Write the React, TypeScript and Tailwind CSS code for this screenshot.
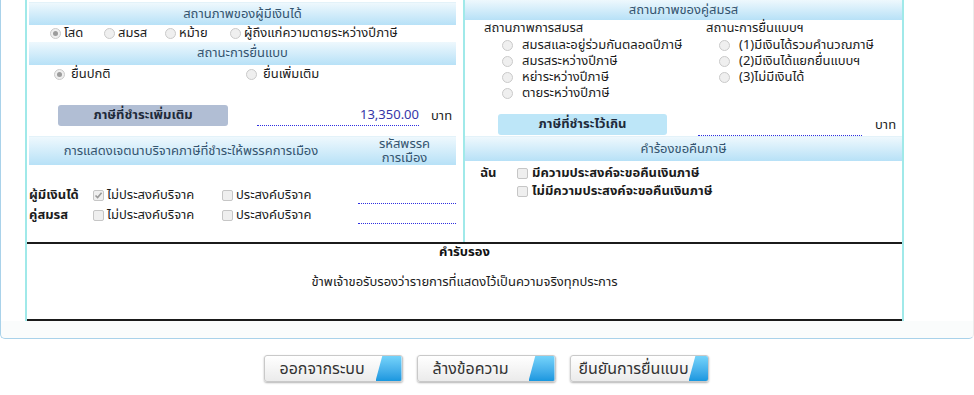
import React from "react";

function Radio({ checked }: { checked?: boolean }) {
  return (
    <span className="inline-flex h-[11px] w-[11px] shrink-0 items-center justify-center rounded-full border border-[#cacaca] bg-[#efefef]">
      {checked && <span className="h-[5px] w-[5px] rounded-full bg-[#9c9c9c]" />}
    </span>
  );
}

function Check({ checked }: { checked?: boolean }) {
  return (
    <span className="inline-flex h-[11px] w-[11px] shrink-0 items-center justify-center rounded-[2px] border border-[#c6c6c6] bg-[#efefef]">
      {checked && (
        <svg width="9" height="9" viewBox="0 0 9 9">
          <path d="M1.5 4.5 L3.6 6.6 L7.6 1.8" fill="none" stroke="#9a9a9a" strokeWidth="1.6" />
        </svg>
      )}
    </span>
  );
}

function Header({ text, h }: { text: string; h: string }) {
  return (
    <div className={`flex items-center justify-center bg-linear-to-b from-[#eef8fd] to-[#b7e1f7] text-[#34546f] ${h}`}>
      {text}
    </div>
  );
}

function ActionButton({ label, pad }: { label: string; pad: string }) {
  return (
    <div className="flex h-[27px] w-[139px] items-center overflow-hidden rounded-[3px] border border-[#c9c9c9] bg-linear-to-b from-white to-[#ebebeb] shadow-[0_1px_2px_rgba(0,0,0,0.3)]">
      <span className={`flex-1 whitespace-nowrap text-[16px] text-[#333] ${pad}`}>{label}</span>
      <span className="h-full w-[26px] shrink-0 bg-linear-to-b from-[#74d3fa] to-[#1797df] [clip-path:polygon(26%_0,100%_0,100%_100%,0_100%)]" />
    </div>
  );
}

export default function App() {
  return (
    <div className="h-[395px] w-[974px] bg-white font-['Tahoma','Noto_Sans_Thai','Leelawadee','Noto_Sans',sans-serif] text-[13px] leading-none text-[#1c1c1c]">
      <div className="h-[339px] w-[974px] rounded-b-[5px] border-x border-b border-l-[#a9d2ea] border-r-[#ececec] border-b-[#a9d2ea] bg-[#fafcfc]">
        <div className="bg-white pl-[24px] pr-[69px]">
          <div className="w-[879px] border-x-2 border-[#a0e9e9] bg-white">
            <div className="flex h-[242px]">
              {/* left column */}
              <div className="flex w-[436px] flex-col pl-[2px] pr-[7px]">
                <div className="h-[2px]" />
                <div className="h-[1px] bg-[#e3f2f9]" />
                <Header text="สถานภาพของผู้มีเงินได้" h="h-[22px]" />
                <div className="flex h-[17px] items-center pl-[21px]">
                  <div className="flex w-[54px] items-center gap-[3px]"><Radio checked />โสด</div>
                  <div className="flex w-[61px] items-center gap-[3px]"><Radio />สมรส</div>
                  <div className="flex w-[65px] items-center gap-[3px]"><Radio />หม้าย</div>
                  <div className="flex items-center gap-[3px]"><Radio />ผู้ถึงแก่ความตายระหว่างปีภาษี</div>
                </div>
                <Header text="สถานะการยื่นแบบ" h="h-[23px]" />
                <div className="flex h-[19px] items-center pl-[25px]">
                  <div className="flex w-[192px] items-center gap-[6px]"><Radio checked />ยื่นปกติ</div>
                  <div className="flex items-center gap-[6px]"><Radio />ยื่นเพิ่มเติม</div>
                </div>
                <div className="h-[21px]" />
                <div className="flex h-[21px] items-stretch pl-[29px]">
                  <div className="flex w-[170px] items-center justify-center rounded-[3px] bg-[#b1bed4] font-bold text-[#1f2a3a]">
                    ภาษีที่ชำระเพิ่มเติม
                  </div>
                  <div className="ml-[29px] flex w-[162px] items-center justify-end border-b border-dotted border-[#2f2fe0] text-[#3535a8]">
                    13,350.00
                  </div>
                  <div className="ml-[12px] flex items-center pt-[2px]">บาท</div>
                </div>
                <div className="h-[10px]" />
                <div className="h-[1px] bg-[#e3f2f9]" />
                <div className="flex h-[28px] bg-linear-to-b from-[#eef8fd] to-[#b7e1f7] text-[#34546f]">
                  <div className="flex w-[324px] items-center justify-center">การแสดงเจตนาบริจาคภาษีที่ชำระให้พรรคการเมือง</div>
                  <div className="flex flex-1 flex-col items-center justify-center leading-[14px]">
                    <span>รหัสพรรค</span>
                    <span>การเมือง</span>
                  </div>
                </div>
                <div className="h-[21px]" />
                <div className="flex h-[18px] items-stretch">
                  <div className="flex w-[64px] items-center font-bold">ผู้มีเงินได้</div>
                  <div className="flex w-[129px] items-center gap-[3px]"><Check checked />ไม่ประสงค์บริจาค</div>
                  <div className="flex w-[136px] items-center gap-[3px]"><Check />ประสงค์บริจาค</div>
                  <div className="flex-1 border-b border-dotted border-[#2f2fe0]" />
                </div>
                <div className="mt-[1px] flex h-[19px] items-stretch">
                  <div className="flex w-[64px] items-center pt-[1px] font-bold">คู่สมรส</div>
                  <div className="flex w-[129px] items-center gap-[3px] pt-[1px]"><Check />ไม่ประสงค์บริจาค</div>
                  <div className="flex w-[136px] items-center gap-[3px] pt-[1px]"><Check />ประสงค์บริจาค</div>
                  <div className="flex-1 border-b border-dotted border-[#2f2fe0]" />
                </div>
              </div>
              <div className="w-[2px] bg-[#a0e9e9]" />
              {/* right column */}
              <div className="flex w-[437px] flex-col">
                <Header text="สถานภาพของคู่สมรส" h="h-[20px]" />
                <div className="flex pl-[19px]">
                  <div className="flex w-[222px] flex-col">
                    <div className="flex h-[17px] items-center">สถานภาพการสมรส</div>
                    {["สมรสและอยู่ร่วมกันตลอดปีภาษี", "สมรสระหว่างปีภาษี", "หย่าระหว่างปีภาษี", "ตายระหว่างปีภาษี"].map((t) => (
                      <div key={t} className="flex h-[16px] items-center gap-[9px] pl-[18px]"><Radio />{t}</div>
                    ))}
                  </div>
                  <div className="flex flex-col">
                    <div className="flex h-[17px] items-center">สถานะการยื่นแบบฯ</div>
                    {["(1)มีเงินได้รวมคำนวณภาษี", "(2)มีเงินได้แยกยื่นแบบฯ", "(3)ไม่มีเงินได้"].map((t) => (
                      <div key={t} className="flex h-[16px] items-center gap-[9px] pl-[13px]"><Radio />{t}</div>
                    ))}
                  </div>
                </div>
                <div className="h-[13px]" />
                <div className="flex h-[22px] items-stretch pl-[33px]">
                  <div className="mb-[1px] flex w-[169px] items-center justify-center rounded-[3px] bg-[#bde6f8] font-bold text-[#1f2a3a]">
                    ภาษีที่ชำระไว้เกิน
                  </div>
                  <div className="ml-[31px] w-[164px] border-b border-dotted border-[#2f2fe0]" />
                  <div className="ml-[13px] flex items-center">บาท</div>
                </div>
                <div className="h-[1px] bg-[#e3f2f9]" />
                <Header text="คำร้องขอคืนภาษี" h="h-[24px]" />
                <div className="h-[3px]" />
                <div className="flex pl-[15px] font-bold">
                  <div className="flex h-[18px] w-[37px] items-center">ฉัน</div>
                  <div className="flex flex-col">
                    <div className="flex h-[18px] items-center gap-[4px]"><Check />มีความประสงค์จะขอคืนเงินภาษี</div>
                    <div className="flex h-[18px] items-center gap-[4px]"><Check />ไม่มีความประสงค์จะขอคืนเงินภาษี</div>
                  </div>
                </div>
              </div>
            </div>
            {/* certification */}
            <div className="flex h-[79px] flex-col items-center border-y-2 border-[#1b1b1b]">
              <div className="flex h-[17px] items-center font-bold text-[#111]">คำรับรอง</div>
              <div className="mt-[13px] flex h-[17px] items-center">ข้าพเจ้าขอรับรองว่ารายการที่แสดงไว้เป็นความจริงทุกประการ</div>
            </div>
          </div>
        </div>
      </div>
      <div className="mt-[16px] flex justify-center gap-[14px] pr-[2px]">
        <ActionButton label="ออกจากระบบ" pad="pl-[15px]" />
        <ActionButton label="ล้างข้อความ" pad="pl-[15px]" />
        <ActionButton label="ยืนยันการยื่นแบบ" pad="pl-[8px]" />
      </div>
    </div>
  );
}
